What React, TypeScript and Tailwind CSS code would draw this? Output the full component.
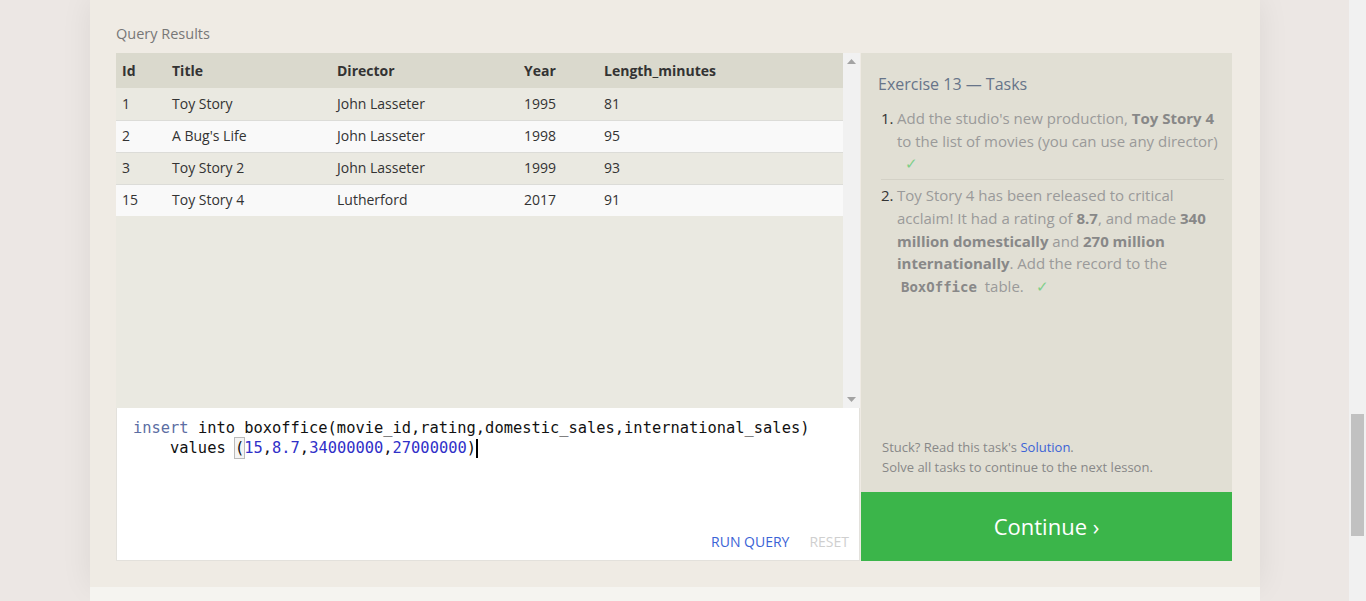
import React from "react";

const rows = [
  ["1", "Toy Story", "John Lasseter", "1995", "81"],
  ["2", "A Bug's Life", "John Lasseter", "1998", "95"],
  ["3", "Toy Story 2", "John Lasseter", "1999", "93"],
  ["15", "Toy Story 4", "Lutherford", "2017", "91"],
];

function Check() {
  return <span className="text-[#7fcf8a] ml-[8px]">✓</span>;
}

export default function App() {
  return (
    <div
      className="flex w-[1366px] h-[601px] overflow-hidden bg-[#ece7e4]"
      style={{ fontFamily: '"Open Sans", "Noto Sans", sans-serif' }}
    >
      <div className="flex-1 pl-[90px] flex flex-col">
        <div className="w-[1170px] bg-[#efebe4] shadow-[0_0_30px_rgba(0,0,0,0.07)] px-[26px] pt-[23px] pb-[26px] pr-[28px]">
          <div className="text-[14.5px] leading-[22px] text-[#777]">Query Results</div>
          <div className="mt-[8px] flex">
            {/* Left column */}
            <div className="w-[744px] flex flex-col">
              <div className="h-[355px] flex bg-[#eae9e1]">
                <div className="w-[727px] text-[14px] text-[#333]">
                  <div className="h-[35px] bg-[#dad9cd] flex items-center font-bold">
                    <div className="w-[56px] pl-[6px]">Id</div>
                    <div className="w-[165px]">Title</div>
                    <div className="w-[187px]">Director</div>
                    <div className="w-[80px]">Year</div>
                    <div>Length_minutes</div>
                  </div>
                  {rows.map((r, i) => (
                    <div
                      key={i}
                      className={`h-[32px] flex items-center pb-[2px] ${i > 0 ? "border-t border-[#dcdcd8]" : ""} ${
                        i % 2 === 0 ? "bg-[#eae9e1]" : "bg-[#f9f9f9]"
                      }`}
                    >
                      <div className="w-[56px] pl-[6px]">{r[0]}</div>
                      <div className="w-[165px]">{r[1]}</div>
                      <div className="w-[187px]">{r[2]}</div>
                      <div className="w-[80px]">{r[3]}</div>
                      <div>{r[4]}</div>
                    </div>
                  ))}
                </div>
                <div className="w-[17px] bg-[#f1f1f1] flex flex-col justify-between items-center py-[6px]">
                  <svg width="9" height="5" viewBox="0 0 9 5">
                    <path d="M0 5 L4.5 0 L9 5 Z" fill="#a3a3a3" />
                  </svg>
                  <svg width="9" height="5" viewBox="0 0 9 5">
                    <path d="M0 0 L4.5 5 L9 0 Z" fill="#a3a3a3" />
                  </svg>
                </div>
              </div>
              <div className="h-[153px] bg-white border border-[#e3e1dc] border-t-0 flex flex-col justify-between pl-[16px] pt-[10px] pb-[8px]">
                <div
                  className="text-[15.4px] leading-[20px] text-[#111] whitespace-pre"
                  style={{ fontFamily: '"DejaVu Sans Mono", "Liberation Mono", monospace' }}
                >
                  <div>
                    <span className="text-[#5c6ea3]">insert</span> into boxoffice(movie_id,rating,domestic_sales,international_sales)
                  </div>
                  <div className="flex items-center">
                    <span>{"    values "}</span>
                    <span className="outline outline-1 outline-[#bbb] bg-[#f4f4f4]">(</span>
                    <span className="text-[#3030c8]">15</span>,<span className="text-[#3030c8]">8.7</span>,
                    <span className="text-[#3030c8]">34000000</span>,<span className="text-[#3030c8]">27000000</span>
                    <span>)</span>
                    <span className="inline-block w-[2px] h-[19px] bg-black" />
                  </div>
                </div>
                <div className="flex justify-end gap-[20px] pr-[10px] text-[14px] leading-[20px] pt-[1px]">
                  <span className="text-[#3b63d6]">RUN QUERY</span>
                  <span className="text-[#cfcfcf]">RESET</span>
                </div>
              </div>
            </div>
            {/* Right column */}
            <div className="w-[371px] ml-[1px] flex flex-col">
              <div className="flex-1 bg-[#e1dfd4] pl-[17px] pr-[8px] pt-[20px] flex flex-col justify-between pb-[15px]">
                <div>
                  <div className="text-[16px] leading-[22px] text-[#677489]">Exercise 13 — Tasks</div>
                  <ol className="mt-[12px] text-[15px] leading-[22.7px] text-[#9a9a9a]">
                    <li className="flex pb-[4px] border-b border-[#d3d1c6] ml-[3px]">
                      <span className="w-[16px] shrink-0 text-[#333]">1.</span>
                      <span>
                        Add the studio's new production, <b className="text-[#888]">Toy Story 4</b>
                        <br />
                        to the list of movies (you can use any director)
                        <br />
                        <Check />
                      </span>
                    </li>
                    <li className="flex pt-[4px] ml-[3px]">
                      <span className="w-[16px] shrink-0 text-[#333]">2.</span>
                      <span>
                        Toy Story 4 has been released to critical acclaim! It had a rating of <b className="text-[#888]">8.7</b>, and made{" "}
                        <b className="text-[#888]">340 million domestically</b> and <b className="text-[#888]">270 million internationally</b>. Add the record to the{" "}
                        <b
                          className="text-[#888] px-[4px]"
                          style={{ fontFamily: '"DejaVu Sans Mono", "Liberation Mono", monospace', fontSize: "14px" }}
                        >
                          BoxOffice
                        </b>{" "}
                        table. <Check />
                      </span>
                    </li>
                  </ol>
                </div>
                <div className="text-[13px] leading-[20px] text-[#888] pl-[4px]">
                  <div>
                    Stuck? Read this task's <span className="text-[#3b63d6]">Solution</span>.
                  </div>
                  <div>Solve all tasks to continue to the next lesson.</div>
                </div>
              </div>
              <div className="h-[69px] bg-[#3bb54a] flex items-center justify-center text-white text-[22px]">
                Continue ›
              </div>
            </div>
          </div>
        </div>
        <div className="w-[1170px] flex-1 bg-[#f5f4f0]" />
      </div>
      <div className="w-[17px] bg-[#f1f1f1] pt-[414px]">
        <div className="h-[122px] mx-[2px] bg-[#c1c1c1]" />
      </div>
    </div>
  );
}
